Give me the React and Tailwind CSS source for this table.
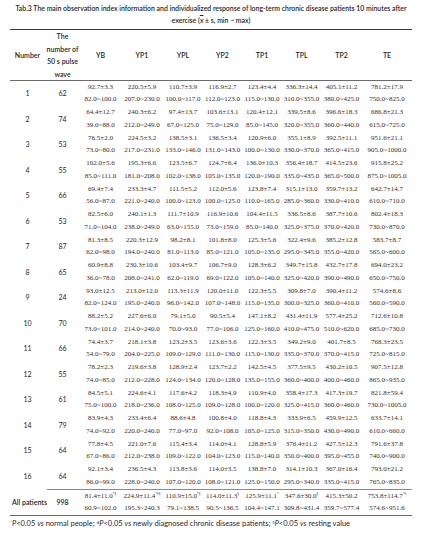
import React from "react";

const rows = [
  [1, 62, ["92.7±3.3","220.5±5.9","110.7±3.9","116.9±2.7","123.4±4.4","336.3±14.4","405.1±11.2","781.2±17.9"], ["82.0~100.0","207.0~230.0","100.0~117.0","112.0~123.0","115.0~130.0","310.0~355.0","380.0~425.0","750.0~825.0"]],
  [2, 74, ["64.4±12.7","240.3±6.2","97.4±13.7","103.6±13.1","120.4±12.1","339.5±8.6","396.6±18.3","686.8±21.3"], ["39.0~88.0","212.0~249.0","67.0~125.0","75.0~129.0","85.0~145.0","320.0~355.0","360.0~440.0","615.0~725.0"]],
  [3, 53, ["76.5±2.0","224.5±3.2","138.5±3.1","136.5±3.4","120.9±6.0","355.1±8.9","392.5±11.1","951.6±21.1"], ["73.0~80.0","217.0~231.0","133.0~146.0","131.0~143.0","100.0~130.0","330.0~370.0","365.0~415.0","905.0~1000.0"]],
  [4, 55, ["102.0±5.6","195.3±6.6","123.5±6.7","124.7±6.4","136.0±10.3","356.4±18.7","414.5±23.6","915.8±25.2"], ["85.0~111.0","181.0~208.0","102.0~138.0","105.0~135.0","120.0~190.0","335.0~435.0","365.0~500.0","875.0~1005.0"]],
  [5, 66, ["69.4±7.4","233.3±4.7","111.5±5.2","112.0±5.6","123.8±7.4","315.1±13.0","359.7±13.2","642.7±14.7"], ["56.0~87.0","221.0~240.0","100.0~123.0","100.0~125.0","110.0~165.0","285.0~360.0","330.0~410.0","610.0~710.0"]],
  [6, 53, ["82.5±6.0","240.1±1.3","111.7±10.9","116.9±10.6","104.4±11.5","336.5±8.6","387.7±10.6","802.4±18.3"], ["71.0~104.0","238.0~249.0","63.0~155.0","73.0~159.0","85.0~140.0","325.0~375.0","370.0~420.0","730.0~870.0"]],
  [7, 87, ["81.3±8.5","220.3±12.9","98.2±8.1","101.8±8.0","125.3±5.6","322.4±9.6","385.2±12.8","583.7±8.7"], ["62.0~98.0","194.0~240.0","81.0~113.0","85.0~121.0","105.0~135.0","295.0~345.0","355.0~420.0","565.0~600.0"]],
  [8, 65, ["60.9±8.8","230.3±10.6","103.4±9.7","106.7±9.0","128.3±6.2","349.7±15.8","432.7±17.8","694.0±23.2"], ["36.0~78.0","208.0~241.0","62.0~119.0","69.0~122.0","105.0~140.0","325.0~420.0","390.0~490.0","650.0~750.0"]],
  [9, 24, ["93.0±12.5","213.0±12.0","113.3±11.9","120.0±11.0","122.3±5.5","309.8±7.0","390.4±11.2","574.6±8.6"], ["82.0~124.0","195.0~240.0","96.0~142.0","107.0~148.0","115.0~135.0","300.0~325.0","360.0~410.0","560.0~590.0"]],
  [10, 70, ["88.2±5.2","227.6±6.0","79.1±5.0","90.5±5.4","147.1±8.2","431.4±11.9","577.4±25.2","712.6±10.8"], ["73.0~101.0","214.0~240.0","70.0~93.0","77.0~106.0","125.0~160.0","410.0~475.0","510.0~620.0","685.0~730.0"]],
  [11, 66, ["74.4±3.7","218.1±3.8","123.2±3.5","123.6±3.6","122.3±3.5","349.2±9.0","401.7±8.5","768.3±23.5"], ["54.0~79.0","204.0~225.0","109.0~129.0","111.0~130.0","115.0~130.0","335.0~370.0","370.0~415.0","725.0~815.0"]],
  [12, 55, ["78.2±2.3","219.6±3.8","128.9±2.4","123.7±2.2","142.5±4.5","377.5±9.5","430.2±10.5","907.5±12.8"], ["74.0~85.0","212.0~228.0","124.0~134.0","120.0~128.0","135.0~155.0","360.0~400.0","400.0~460.0","865.0~935.0"]],
  [13, 61, ["84.5±5.1","224.6±4.1","117.6±4.2","118.3±4.9","110.9±4.0","358.4±17.3","417.3±19.7","821.8±59.4"], ["75.0~100.0","218.0~236.0","108.0~125.0","109.0~128.0","100.0~120.0","325.0~415.0","360.0~460.0","730.0~1005.0"]],
  [14, 79, ["83.9±4.3","233.4±6.4","88.6±4.8","100.8±4.0","118.8±4.3","333.9±6.5","459.9±12.5","633.7±14.1"], ["74.0~92.0","220.0~240.0","77.0~97.0","92.0~108.0","105.0~125.0","315.0~350.0","430.0~490.0","610.0~660.0"]],
  [15, 64, ["77.8±4.5","221.0±7.6","115.4±3.4","114.0±4.1","128.8±5.9","376.4±11.2","427.5±12.3","791.6±37.8"], ["67.0~86.0","212.0~238.0","109.0~122.0","104.0~123.0","115.0~140.0","350.0~400.0","395.0~455.0","740.0~900.0"]],
  [16, 64, ["92.1±3.4","236.5±4.3","113.8±3.6","114.0±3.5","138.8±7.0","314.1±10.3","367.0±16.4","793.0±21.2"], ["86.0~99.0","228.0~240.0","107.0~120.0","108.0~121.0","125.0~150.0","295.0~340.0","335.0~415.0","765.0~835.0"]],
];

const allMean = [
  ["81.4±11.0", "*§"],
  ["224.9±11.4", "*#§"],
  ["110.9±15.0", "*§"],
  ["114.0±11.3", "§"],
  ["125.9±11.1", "*"],
  ["347.6±30.0", "§"],
  ["415.3±50.2", ""],
  ["753.8±114.7", "*#"],
];
const allRange = ["60.9~102.0","195.3~240.3","79.1~138.5","90.5~136.5","104.4~147.1","309.8~431.4","359.7~577.4","574.6~951.6"];

const heads = ["YB", "YP1", "YPL", "YP2", "TP1", "TPL", "TP2", "TE"];

const grid = "grid grid-cols-[35px_35px_41px_42px_40px_39px_40px_39px_41px_50px]";
const sans = "font-['Lato','Liberation_Sans',sans-serif] text-[#262626]";
const serif = "font-['Liberation_Serif',serif] text-[#3d2b18]";

function DataCell({ children }) {
  return (
    <div className={`${serif} text-[7px] h-[12.75px] flex items-center justify-center whitespace-nowrap`}>
      {children}
    </div>
  );
}

function Group({ num, count, mean, range }) {
  return (
    <div className={`${grid} grid-rows-[12.75px_12.75px]`}>
      <div className={`${sans} text-[7px] row-span-2 flex items-center justify-center`}>{num}</div>
      <div className={`${sans} text-[7px] row-span-2 flex items-center justify-center`}>{count}</div>
      {mean.map((m, i) => (
        <DataCell key={"m" + i}>{m}</DataCell>
      ))}
      {range.map((r, i) => (
        <DataCell key={"r" + i}>{r}</DataCell>
      ))}
    </div>
  );
}

export default function App() {
  return (
    <div className="w-[422px] h-[538px] bg-white overflow-hidden relative">
      <div className={`${sans} font-semibold text-[6.9px] leading-[12px] text-center pt-[2px] px-[4px]`}>
        <div className="whitespace-nowrap">
          Tab.3 The main observation index information and individualized response of long-term chronic disease patients 10 minutes after
        </div>
        <div>
          exercise (<span className="overline">x</span> ± s, min ~ max)
        </div>
      </div>
      <div className="mx-[10px] mt-[3px] w-[402px]">
        <div className="border-t-[1.5px] border-[#3a3a3a]" />
        <div className={`${grid} h-[50.5px] border-b border-[#6a6a6a]`}>
          <div className={`${sans} text-[7px] font-semibold flex items-center justify-center`}>Number</div>
          <div className={`${sans} text-[7px] font-semibold flex flex-col items-center justify-center leading-[12.7px] whitespace-nowrap`}>
            <span>The</span>
            <span>number of</span>
            <span>50 s pulse</span>
            <span>wave</span>
          </div>
          {heads.map((h) => (
            <div key={h} className={`${sans} text-[7px] font-semibold flex items-center justify-center`}>
              {h}
            </div>
          ))}
        </div>
        {rows.map(([n, c, m, r]) => (
          <Group key={n} num={n} count={c} mean={m} range={r} />
        ))}
        <div className="ml-[37px] border-t border-[#8a8a8a]" />
        <div className={`${grid} grid-rows-[12.75px_12.75px]`}>
          <div className={`${sans} text-[7px] font-semibold col-span-1 row-span-2 flex items-center justify-start pl-[2px] whitespace-nowrap`}>
            All patients
          </div>
          <div className={`${sans} text-[7px] font-semibold row-span-2 flex items-center justify-center`}>998</div>
          {allMean.map(([v, s], i) => (
            <DataCell key={"am" + i}>
              {v}
              {s && <sup className="text-[3.5px] relative -top-[1px] leading-none">{s}</sup>}
            </DataCell>
          ))}
          {allRange.map((r, i) => (
            <DataCell key={"ar" + i}>{r}</DataCell>
          ))}
        </div>
        <div className="border-t-[1.5px] border-[#6a6a6a]" />
        <div className={`${sans} text-[7.5px] leading-[12px] mt-[2px] whitespace-nowrap`}>
          <sup className="text-[4.5px]">*</sup>
          <i>P</i>&lt;0.05 <i>vs</i> normal people; <sup className="text-[4.5px]">#</sup>
          <i>P</i>&lt;0.05 <i>vs</i> newly diagnosed chronic disease patients; <sup className="text-[4.5px]">§</sup>
          <i>P</i>&lt;0.05 <i>vs</i> resting value
        </div>
      </div>
    </div>
  );
}
